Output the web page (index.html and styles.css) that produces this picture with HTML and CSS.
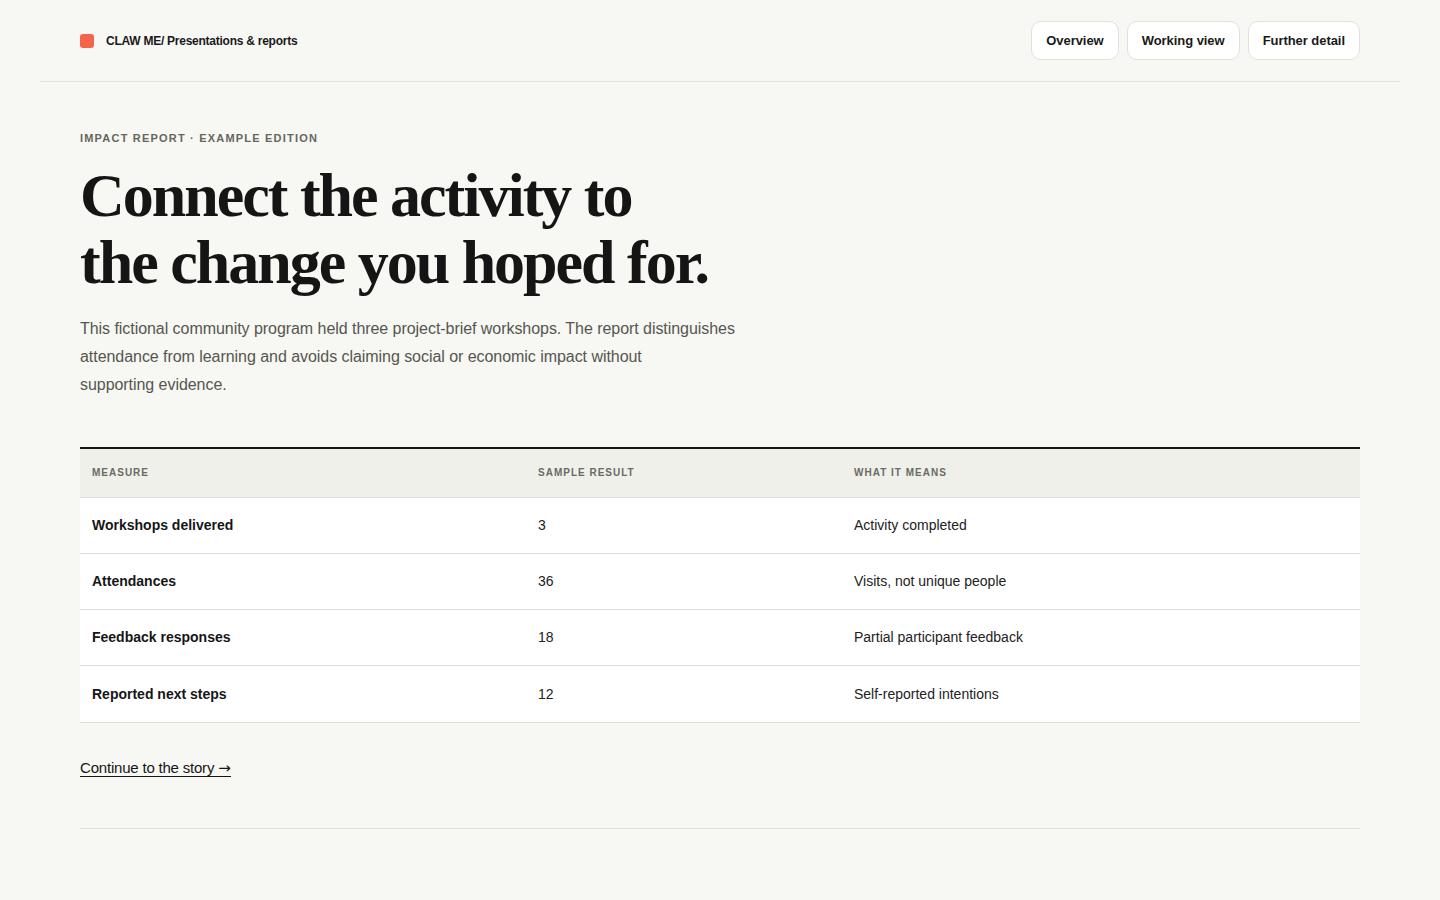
FILE: index.html
```html
<!DOCTYPE html>
<html lang="en">
<head>
<meta charset="utf-8">
<title>Impact report</title>
<link rel="stylesheet" href="styles.css">
</head>
<body>
<header class="topbar">
  <div class="brand">
    <span class="brand-mark"></span>
    <span class="brand-text">CLAW ME/ Presentations &amp; reports</span>
  </div>
  <nav class="nav">
    <a class="nav-btn" href="#">Overview</a>
    <a class="nav-btn" href="#">Working view</a>
    <a class="nav-btn" href="#">Further detail</a>
  </nav>
</header>
<main class="main">
  <p class="eyebrow">IMPACT REPORT · EXAMPLE EDITION</p>
  <h1 class="title">Connect the activity to<br>the change you hoped for.</h1>
  <p class="lede">This fictional community program held three project-brief workshops. The report distinguishes attendance from learning and avoids claiming social or economic impact without<br>supporting evidence.</p>
  <table class="data">
    <thead>
      <tr><th class="c1">MEASURE</th><th class="c2">SAMPLE RESULT</th><th class="c3">WHAT IT MEANS</th></tr>
    </thead>
    <tbody>
      <tr><td class="c1">Workshops delivered</td><td>3</td><td>Activity completed</td></tr>
      <tr><td class="c1">Attendances</td><td>36</td><td>Visits, not unique people</td></tr>
      <tr><td class="c1">Feedback responses</td><td>18</td><td>Partial participant feedback</td></tr>
      <tr class="last"><td class="c1">Reported next steps</td><td>12</td><td>Self-reported intentions</td></tr>
    </tbody>
  </table>
  <p class="more"><a class="more-link" href="#">Continue to the story <span class="arrow">→</span></a></p>
  <footer class="foot"></footer>
</main>
</body>
</html>
```

FILE: styles.css
```css
* { box-sizing: border-box; }
html, body { margin: 0; padding: 0; }
body {
  background: #f7f7f3;
  color: #161616;
  font-family: "Liberation Sans", Arial, sans-serif;
}
.topbar {
  margin: 0 40px;
  padding: 21px 40px 21px;
  border-bottom: 1px solid #e2e2dc;
  display: flex;
  align-items: center;
  justify-content: space-between;
}
.brand { display: flex; align-items: center; gap: 12px; }
.brand-mark {
  width: 14px; height: 14px;
  background: #f4644b;
  border-radius: 3px;
}
.brand-text {
  font-size: 12px;
  font-weight: 700;
  letter-spacing: -0.25px;
  color: #1a1a1a;
}
.nav { display: flex; gap: 8px; }
.nav-btn {
  display: inline-flex;
  align-items: center;
  height: 39px;
  padding: 0 14px;
  background: #fff;
  border: 1px solid #e2e2dc;
  border-radius: 10px;
  font-size: 13px;
  font-weight: 700;
  letter-spacing: -0.05px;
  color: #1a1a1a;
  text-decoration: none;
}
.main { padding: 48px 80px 0; }
.eyebrow {
  margin: 0;
  font-size: 11px;
  line-height: 16px;
  font-weight: 700;
  letter-spacing: 1.2px;
  color: #66665f;
}
.title {
  margin: 16px 0 0;
  font-family: "Liberation Serif", "Times New Roman", serif;
  font-weight: 700;
  font-size: 62px;
  line-height: 67px;
  letter-spacing: -2px;
  color: #151515;
}
.lede {
  margin: 19px 0 0;
  max-width: 670px;
  font-size: 16px;
  line-height: 28px;
  letter-spacing: -0.05px;
  color: #56564f;
}
.data {
  margin-top: 48px;
  width: 100%;
  border-collapse: collapse;
  border-top: 2px solid #161616;
}
.data th {
  background: #f0f0eb;
  text-align: left;
  height: 49px;
  padding: 0 12px;
  font-size: 10px;
  font-weight: 700;
  letter-spacing: 1px;
  color: #6a6a63;
  border-bottom: 1px solid #e0e0da;
}
.data th.c1 { width: 446px; }
.data th.c2 { width: 316px; }
.data td {
  background: #fff;
  height: 56px;
  padding: 0 12px;
  font-size: 14px;
  color: #222;
  border-bottom: 1px solid #e0e0da;
}
.data tr.last td { height: 57px; }
.data td.c1 { font-weight: 700; color: #161616; }
.more { margin: 35px 0 0; font-size: 15px; line-height: 20px; }
.more-link {
  color: #161616;
  text-decoration: none;
  border-bottom: 1px solid #161616;
  letter-spacing: -0.2px;
}
.arrow { font-family: "DejaVu Sans", sans-serif; font-size: 15px; }
.foot {
  margin-top: 50px;
  border-top: 1px solid #e0e0da;
}
```
